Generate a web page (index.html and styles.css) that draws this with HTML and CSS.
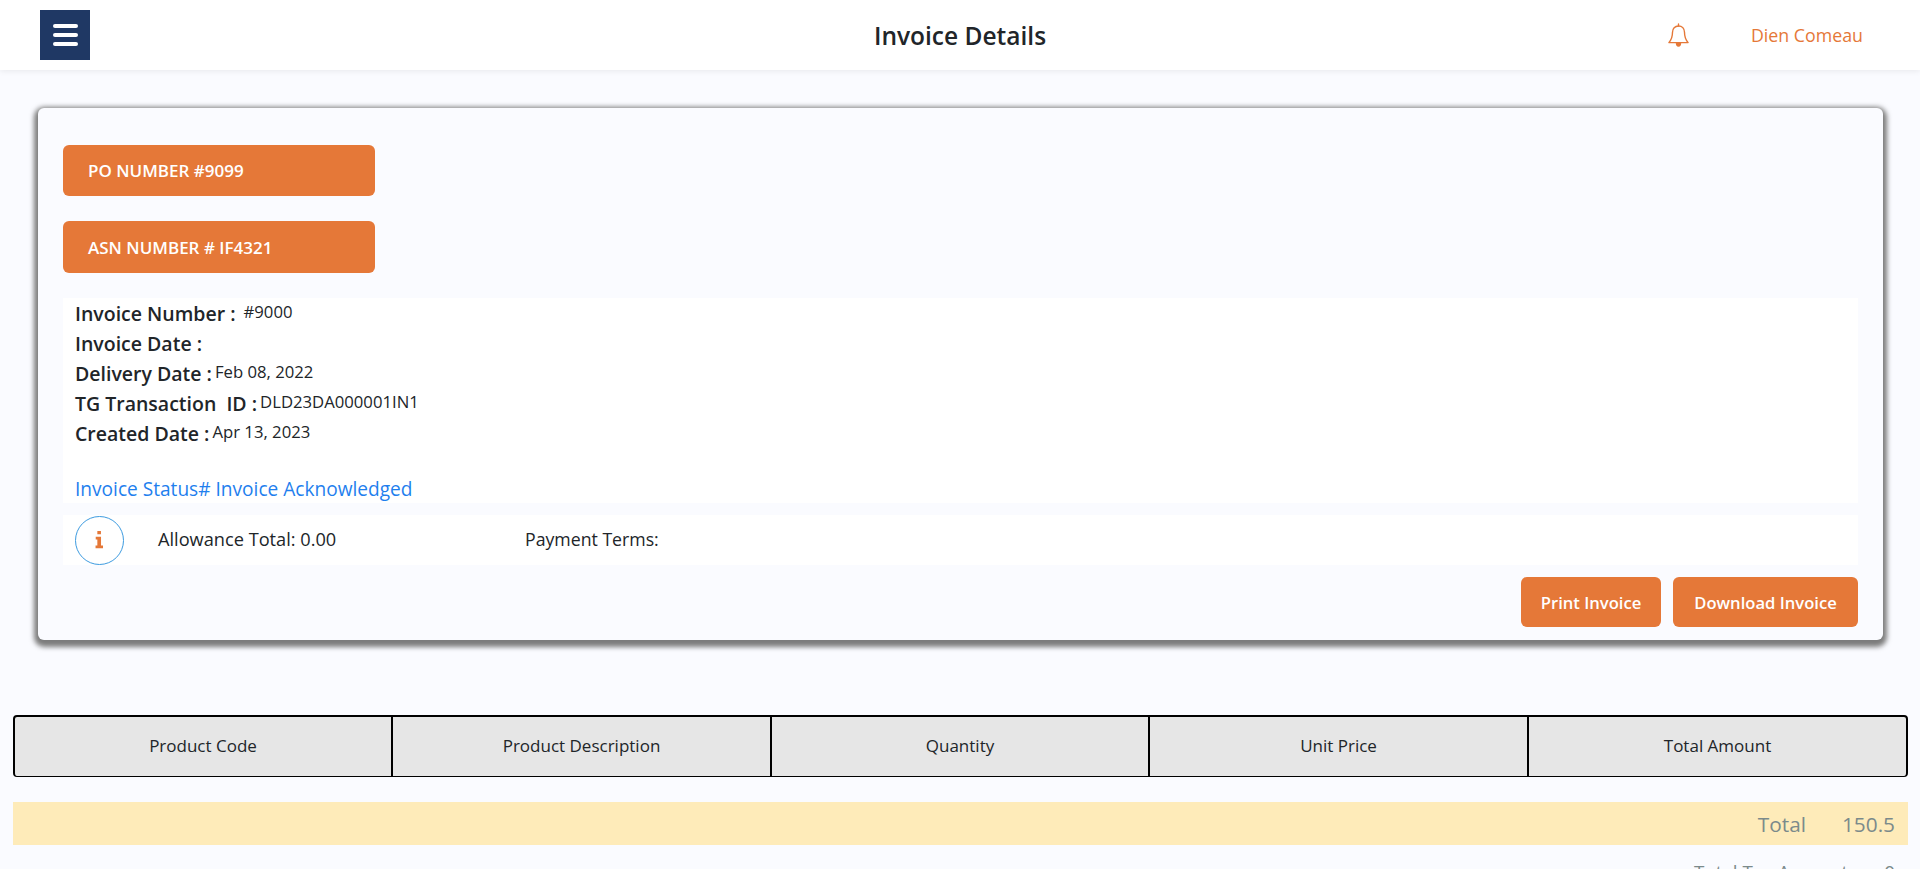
FILE: index.html
```html
<!DOCTYPE html>
<html lang="en">
<head>
  <meta charset="UTF-8">
  <meta name="viewport" content="width=device-width, initial-scale=1.0">
  <title>Invoice Details</title>
  <link rel="stylesheet" href="styles.css">
</head>
<body>
  <header class="topbar">
    <button class="menu-btn" type="button" aria-label="Menu">
      <span></span><span></span><span></span>
    </button>
    <h1 class="page-title">Invoice Details</h1>
    <div class="topbar-right">
      <svg class="bell" viewBox="0 0 21 24" width="21" height="24" fill="none" stroke="#e57838" stroke-width="1.4" stroke-linejoin="round" stroke-linecap="round">
        <path d="M10.500 1v2"/>
        <path d="M10.500 3c-3.600 0-6 2.700-6 6.300 0 5.700-1.300 7.800-3.600 10.300h19.200c-2.300-2.500-3.600-4.600-3.600-10.300 0-3.600-2.400-6.300-6-6.300z"/>
        <path d="M8.500 20c0 1.900.9 3 2 3s2-1.100 2-3" fill="#e57838"/>
      </svg>
      <span class="user-name">Dien Comeau</span>
    </div>
  </header>

  <main>
    <section class="invoice-card">
      <div class="number-tag">PO NUMBER #9099</div>
      <div class="number-tag">ASN NUMBER # IF4321</div>

      <div class="details">
        <div class="detail-row"><b class="detail-label first">Invoice Number :</b><span class="detail-value">#9000</span></div>
        <div class="detail-row"><b class="detail-label">Invoice Date :</b></div>
        <div class="detail-row"><b class="detail-label">Delivery Date :</b><span class="detail-value">Feb 08, 2022</span></div>
        <div class="detail-row"><b class="detail-label">TG Transaction&nbsp; ID :</b><span class="detail-value">DLD23DA000001IN1</span></div>
        <div class="detail-row"><b class="detail-label">Created Date :</b><span class="detail-value">Apr 13, 2023</span></div>
        <div class="status">Invoice Status# Invoice Acknowledged</div>
      </div>

      <div class="info-row">
        <div class="info-icon">
          <svg viewBox="0 0 10 20" width="9" height="18"><path fill="#e57838" d="M2.600 0h4v3.600h-4zM.8 6.400h5.900v9.800h2.200v3.100H.6v-3.100h2v-6.700H.8z"/></svg>
        </div>
        <span class="allowance">Allowance Total: 0.00</span>
        <span class="terms">Payment Terms:</span>
      </div>

      <div class="actions">
        <button class="action-btn print-btn" type="button">Print Invoice</button>
        <button class="action-btn download-btn" type="button">Download Invoice</button>
      </div>
    </section>

    <table class="products">
      <thead>
        <tr>
          <th>Product Code</th>
          <th>Product Description</th>
          <th>Quantity</th>
          <th>Unit Price</th>
          <th>Total Amount</th>
        </tr>
      </thead>
    </table>

    <div class="total-band">
      <span class="total-label">Total</span>
      <span class="total-value">150.5</span>
    </div>
    <div class="tax-row">
      <span class="total-label">Total Tax Amount</span>
      <span class="total-value">0</span>
    </div>
  </main>
</body>
</html>
```

FILE: styles.css
```css
html, body {
  height: 869px;
  overflow: hidden;
}

body {
  font-family: "Open Sans", "Noto Sans", sans-serif;
  margin: 0;
  background-color: #fafbff;
  color: #212529;
}

.topbar {
  height: 70px;
  background-color: #fff;
  box-shadow: 0 1px 6px rgba(0, 0, 0, 0.08);
  display: flex;
  align-items: center;
  justify-content: space-between;
  padding: 0 57px 0 40px;
  position: relative;
}

.menu-btn {
  width: 50px;
  height: 50px;
  border: none;
  padding: 0 0 0 1px;
  background-color: #1f3864;
  display: flex;
  flex-direction: column;
  align-items: center;
  justify-content: center;
  gap: 5px;
}

.menu-btn span {
  width: 25px;
  height: 4px;
  border-radius: 2px;
  background-color: #fff;
}

.page-title {
  position: absolute;
  left: 0;
  right: 0;
  margin: 0;
  text-align: center;
  font-size: 24.5px;
  font-weight: 600;
  pointer-events: none;
}

.topbar-right {
  display: flex;
  align-items: center;
  gap: 62px;
}

.bell {
  display: block;
}

.user-name {
  color: #e57838;
  font-size: 17.8px;
}

.invoice-card {
  margin: 38px 37px 0 38px;
  height: 532px;
  box-sizing: border-box;
  padding: 37px 25px 0;
  border-radius: 6px;
  background-color: #fafbff;
  box-shadow: 0 3px 5px 4px #7c7c7c;
}

.number-tag {
  width: 312px;
  height: 51px;
  box-sizing: border-box;
  margin-bottom: 25px;
  padding: 0 25px;
  display: flex;
  align-items: center;
  border-radius: 6px;
  background-color: #e57838;
  color: #fff;
  font-size: 17px;
  font-weight: 600;
}

.number-tag + .number-tag {
  height: 52px;
}

.details {
  height: 205px;
  box-sizing: border-box;
  padding: 0 12px;
  background-color: #fff;
}

.detail-row {
  height: 30px;
  display: flex;
  align-items: center;
  gap: 3px;
}

.detail-label {
  font-size: 19.5px;
  font-weight: 600;
}

.detail-label.first {
  margin-right: 5px;
}

.detail-value {
  font-size: 16.7px;
  position: relative;
  top: -2px;
}

.status {
  margin-top: 28px;
  color: #1f7fee;
  font-size: 19.1px;
}

.info-row {
  height: 50px;
  box-sizing: border-box;
  margin-top: 12px;
  padding-left: 12px;
  display: flex;
  align-items: center;
  background-color: #fff;
  font-size: 18.2px;
  font-weight: 500;
}

.info-icon {
  width: 49px;
  height: 49px;
  box-sizing: border-box;
  border: 1px solid #3d9be0;
  border-radius: 50%;
  display: flex;
  align-items: center;
  justify-content: center;
}

.allowance {
  margin-left: 34px;
  width: 367px;
  margin-bottom: 2px;
}

.terms {
  margin-bottom: 2px;
  font-size: 17.7px;
}

.actions {
  display: flex;
  justify-content: flex-end;
  gap: 12px;
  margin-top: 12px;
}

.action-btn {
  height: 50px;
  padding: 0;
  border: none;
  border-radius: 6px;
  background-color: #e57838;
  color: #fff;
  font-family: inherit;
  font-size: 16.6px;
  font-weight: 600;
}

.print-btn {
  width: 140px;
}

.download-btn {
  width: 185px;
}

.products {
  width: 1895px;
  margin: 75px 0 0 13px;
  table-layout: fixed;
  border-collapse: separate;
  border-spacing: 0;
  border: solid #000;
  border-width: 2px 2px 1px 2px;
  border-radius: 4px;
  background-color: #e6e6e6;
}

.products th {
  height: 59px;
  padding: 0 0 2px;
  box-sizing: border-box;
  font-size: 17px;
  font-weight: 500;
  border-right: 2px solid #000;
}

.products th:nth-child(1),
.products th:nth-child(3) {
  width: 378px;
}

.products th:nth-child(2),
.products th:nth-child(4) {
  width: 379px;
}

.products th:last-child {
  border-right: none;
}

.total-band,
.tax-row {
  margin: 0 12px 0 13px;
  display: flex;
  justify-content: flex-end;
  padding-right: 13px;
  color: #7b8a8b;
  font-size: 20.8px;
}

.total-band {
  height: 43px;
  margin-top: 25px;
  align-items: center;
  background-color: #feebb9;
}

.tax-row {
  margin-top: 14px;
  font-size: 18.8px;
}

.total-value {
  margin-left: 36px;
}
```
